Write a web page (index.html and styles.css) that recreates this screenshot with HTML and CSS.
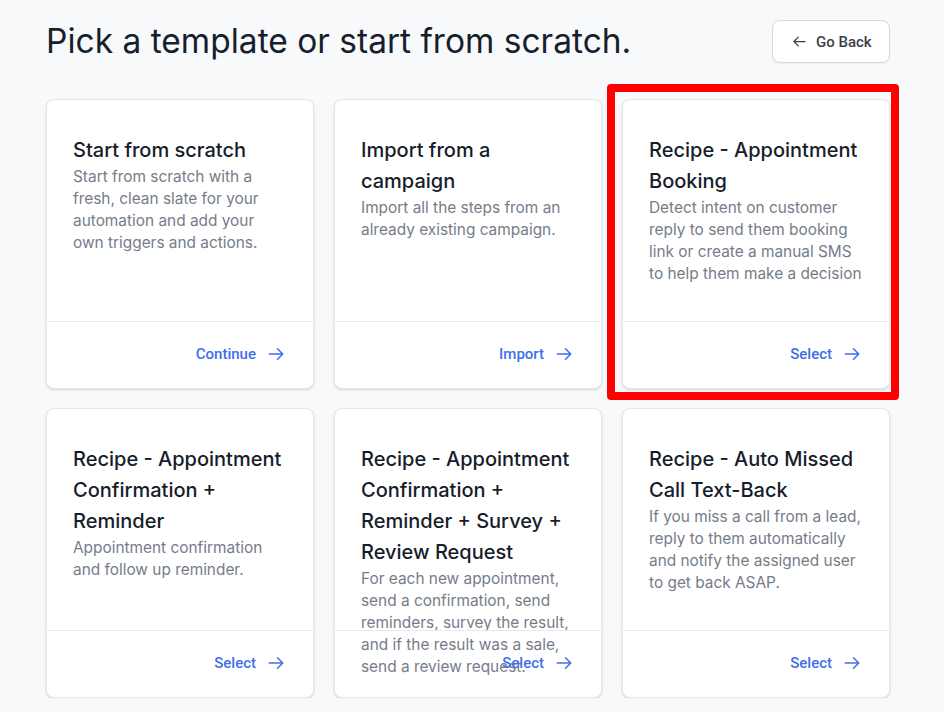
FILE: index.html
```html
<!DOCTYPE html>
<html lang="en">
<head>
<meta charset="utf-8">
<title>Pick a template</title>
<link rel="stylesheet" href="styles.css">
</head>
<body>
<main class="page">
  <header class="page-header">
    <h1 class="page-title">Pick a template or start from scratch.</h1>
    <button class="back-btn" type="button">
      <svg class="icon" viewBox="0 0 24 24" width="16" height="16" fill="none" stroke="currentColor" stroke-width="2" stroke-linecap="round" stroke-linejoin="round"><path d="M10 19l-7-7m0 0l7-7m-7 7h18"/></svg>
      <span>Go Back</span>
    </button>
  </header>

  <section class="template-grid">
    <article class="card">
      <div class="card-body">
        <h2 class="card-title">Start from scratch</h2>
        <p class="card-desc">Start from scratch with a fresh, clean slate for your automation and add your own triggers and actions.</p>
      </div>
      <div class="card-footer">
        <a class="card-action" href="#">Continue
          <svg class="icon" viewBox="0 0 24 24" width="18" height="18" fill="none" stroke="currentColor" stroke-width="2" stroke-linecap="round" stroke-linejoin="round"><path d="M14 5l7 7m0 0l-7 7m7-7H3"/></svg>
        </a>
      </div>
    </article>

    <article class="card">
      <div class="card-body">
        <h2 class="card-title">Import from a campaign</h2>
        <p class="card-desc">Import all the steps from an already existing campaign.</p>
      </div>
      <div class="card-footer">
        <a class="card-action" href="#">Import
          <svg class="icon" viewBox="0 0 24 24" width="18" height="18" fill="none" stroke="currentColor" stroke-width="2" stroke-linecap="round" stroke-linejoin="round"><path d="M14 5l7 7m0 0l-7 7m7-7H3"/></svg>
        </a>
      </div>
    </article>

    <article class="card card-highlight">
      <div class="card-body">
        <h2 class="card-title">Recipe - Appointment Booking</h2>
        <p class="card-desc">Detect intent on customer reply to send them booking link or create a manual SMS to help them make a decision</p>
      </div>
      <div class="card-footer">
        <a class="card-action" href="#">Select
          <svg class="icon" viewBox="0 0 24 24" width="18" height="18" fill="none" stroke="currentColor" stroke-width="2" stroke-linecap="round" stroke-linejoin="round"><path d="M14 5l7 7m0 0l-7 7m7-7H3"/></svg>
        </a>
      </div>
      <div class="highlight-frame"></div>
    </article>

    <article class="card">
      <div class="card-body">
        <h2 class="card-title">Recipe - Appointment Confirmation + Reminder</h2>
        <p class="card-desc">Appointment confirmation and follow up reminder.</p>
      </div>
      <div class="card-footer">
        <a class="card-action" href="#">Select
          <svg class="icon" viewBox="0 0 24 24" width="18" height="18" fill="none" stroke="currentColor" stroke-width="2" stroke-linecap="round" stroke-linejoin="round"><path d="M14 5l7 7m0 0l-7 7m7-7H3"/></svg>
        </a>
      </div>
    </article>

    <article class="card">
      <div class="card-body">
        <h2 class="card-title">Recipe - Appointment Confirmation + Reminder + Survey + Review Request</h2>
        <p class="card-desc">For each new appointment, send a confirmation, send reminders, survey the result, and if the result was a sale, send a review request.</p>
      </div>
      <div class="card-footer">
        <a class="card-action" href="#">Select
          <svg class="icon" viewBox="0 0 24 24" width="18" height="18" fill="none" stroke="currentColor" stroke-width="2" stroke-linecap="round" stroke-linejoin="round"><path d="M14 5l7 7m0 0l-7 7m7-7H3"/></svg>
        </a>
      </div>
    </article>

    <article class="card">
      <div class="card-body">
        <h2 class="card-title">Recipe - Auto Missed Call Text-Back</h2>
        <p class="card-desc">If you miss a call from a lead, reply to them automatically and notify the assigned user to get back ASAP.</p>
      </div>
      <div class="card-footer">
        <a class="card-action" href="#">Select
          <svg class="icon" viewBox="0 0 24 24" width="18" height="18" fill="none" stroke="currentColor" stroke-width="2" stroke-linecap="round" stroke-linejoin="round"><path d="M14 5l7 7m0 0l-7 7m7-7H3"/></svg>
        </a>
      </div>
    </article>
  </section>
</main>
</body>
</html>
```

FILE: styles.css
```css
* {
  box-sizing: border-box;
}

html,
body {
  margin: 0;
  padding: 0;
  background: #f8f9fb;
}

body {
  font-family: Inter, "Noto Sans", sans-serif;
  color: #111827;
  overflow: hidden;
}

.page {
  width: 844px;
  margin-left: 46px;
  padding-top: 20px;
}

/* header */
.page-header {
  display: flex;
  align-items: center;
  justify-content: space-between;
  height: 43px;
  margin-bottom: 36px;
}

.page-title {
  margin: 0;
  font-size: 33.5px;
  font-weight: 400;
  color: #171e2c;
  line-height: 43px;
}

.back-btn {
  display: flex;
  align-items: center;
  gap: 9px;
  height: 43px;
  width: 118px;
  padding: 0 16px 0 19px;
  background: #fff;
  border: 1px solid #d5d8de;
  border-radius: 8px;
  box-shadow: 0 1px 2px rgba(16, 24, 40, 0.05);
  font-family: Roboto, "Noto Sans", sans-serif;
  font-size: 15px;
  font-weight: 500;
  color: #3a3f4a;
  cursor: pointer;
}

.back-btn .icon {
  width: 15px;
  height: 15px;
}

/* cards */
.template-grid {
  display: grid;
  grid-template-columns: repeat(3, 268px);
  grid-auto-rows: 290px;
  column-gap: 20px;
  row-gap: 19px;
}

.card {
  position: relative;
  display: flex;
  flex-direction: column;
  background: #fff;
  border: 1px solid #e6e8ec;
  border-radius: 8px;
  box-shadow: 0 1px 3px rgba(16, 24, 40, 0.10), 0 1px 2px rgba(16, 24, 40, 0.06);
}

.card-body {
  height: 221px;
  flex: none;
  padding: 35px 26px 0 26px;
  overflow: visible;
}

.card-title {
  margin: 0;
  font-size: 20px;
  font-weight: 500;
  line-height: 31px;
  color: #161d2b;
}

.card-desc {
  margin: 0;
  font-size: 15.4px;
  line-height: 22px;
  color: #767c8a;
}

.card-footer {
  flex: 1;
  display: flex;
  align-items: center;
  justify-content: flex-end;
  border-top: 1px solid #e8eaee;
  padding: 0 28px 2px 0;
}

.card-action {
  display: flex;
  align-items: center;
  gap: 11px;
  font-family: Roboto, "Noto Sans", sans-serif;
  font-size: 15px;
  font-weight: 500;
  color: #3f6fe8;
  text-decoration: none;
}

/* selection frame drawn over the highlighted card */
.highlight-frame {
  position: absolute;
  left: -16px;
  top: -16px;
  right: -10px;
  bottom: -12px;
  border: 8px solid #ff0000;
  border-radius: 4px;
  pointer-events: none;
}
```
